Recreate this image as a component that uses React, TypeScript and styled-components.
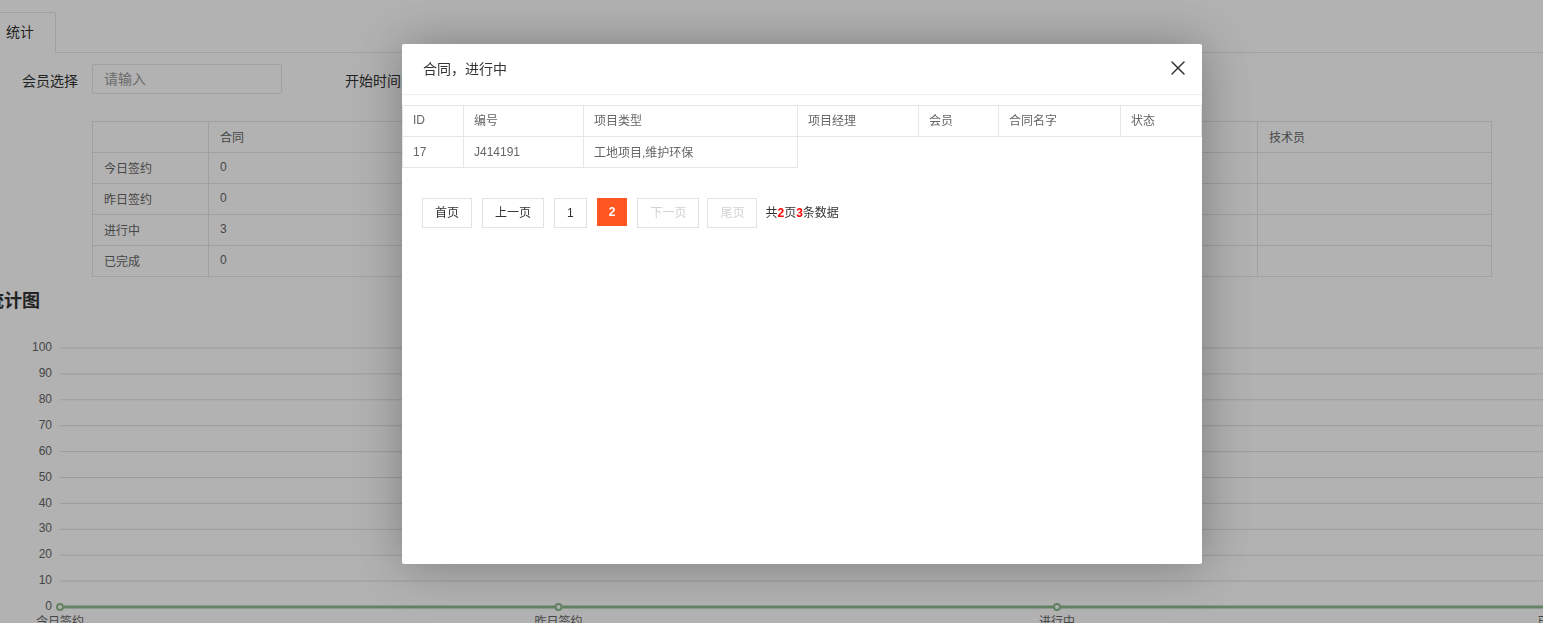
import React from "react";
import styled, { createGlobalStyle } from "styled-components";
import { X } from "lucide-react";

const GlobalStyle = createGlobalStyle`
  html, body {
    margin: 0;
    padding: 0;
    background: #fff;
    overflow: hidden;
  }
  body {
    font-family: "Liberation Sans", "Noto Sans CJK SC", sans-serif;
    font-size: 14px;
    color: #333;
  }
`;

const Page = styled.div`
  width: 1580px;
  margin-left: -14px;
  padding-top: 12px;
`;

const TabBar = styled.ul`
  display: flex;
  margin: 0;
  padding: 0;
  list-style: none;
  height: 40px;
  border-bottom: 1px solid #e6e6e6;
`;

const Tab = styled.li`
  box-sizing: border-box;
  height: 41px;
  line-height: 39px;
  padding: 0 21px 0 19px;
  background: #fff;
  border: 1px solid #e6e6e6;
  border-bottom-color: #fff;
  border-radius: 2px 2px 0 0;
  color: #333;
`;

const FormRow = styled.div`
  display: flex;
  align-items: center;
  height: 30px;
  margin-top: 11px;
  padding-left: 36px;
`;

const Label = styled.label<{ $gap: number }>`
  font-size: 14px;
  color: #333;
  padding-top: 2px;
  margin-right: ${(p) => p.$gap}px;
`;

const Input = styled.input`
  box-sizing: border-box;
  width: 190px;
  height: 30px;
  padding: 0 11px;
  border: 1px solid #e6e6e6;
  border-radius: 2px;
  font-family: inherit;
  font-size: 14px;
  color: #333;
  margin-right: 63px;
  &::placeholder {
    color: #999;
  }
`;

const StatTable = styled.table`
  margin: 27px 0 0 106px;
  width: 1399px;
  border-collapse: collapse;
  table-layout: fixed;
  font-size: 12px;
  color: #666;
`;

const Cell = styled.td`
  height: 31px;
  box-sizing: border-box;
  padding: 0 11px 2px;
  border: 1px solid #e6e6e6;
  text-align: left;
  font-weight: normal;
`;

const ChartTitle = styled.h3`
  margin: 12px 0 0;
  font-size: 18px;
  line-height: 24px;
  font-weight: bold;
  color: #333;
`;

const Chart = styled.svg`
  display: block;
  margin-top: 18px;
  font-family: "Liberation Sans", "Noto Sans CJK SC", sans-serif;
  font-size: 12px;
`;

const Shade = styled.div`
  position: fixed;
  inset: 0;
  background: rgba(0, 0, 0, 0.3);
`;

const Modal = styled.div`
  position: fixed;
  left: 402px;
  top: 44px;
  width: 800px;
  height: 520px;
  background: #fff;
  border-radius: 2px;
  box-shadow: 1px 1px 50px rgba(0, 0, 0, 0.3);
`;

const ModalTitle = styled.div`
  height: 50px;
  line-height: 50px;
  padding: 0 80px 0 21px;
  border-bottom: 1px solid #eee;
  font-size: 14px;
  color: #333;
`;

const CloseButton = styled.span`
  position: absolute;
  top: 12px;
  right: 12px;
  width: 24px;
  height: 24px;
  color: #333;
  cursor: pointer;
  display: flex;
`;

const ListTable = styled.table`
  margin-top: 10px;
  width: 799px;
  border-collapse: collapse;
  table-layout: fixed;
  font-size: 12px;
  color: #666;
`;

const ListCell = styled.td`
  height: 31px;
  box-sizing: border-box;
  padding: 0 10px 1px;
  border: 1px solid #e6e6e6;
  text-align: left;
  font-weight: normal;
  white-space: nowrap;
  th& {
    padding-bottom: 3px;
  }
`;

const Pager = styled.div`
  display: flex;
  align-items: flex-start;
  gap: 10px;
  margin-top: 30px;
  padding-left: 20px;
  font-size: 12px;
`;

const PageBtn = styled.a<{ $disabled?: boolean; $tight?: boolean }>`
  box-sizing: border-box;
  height: 30px;
  line-height: 28px;
  padding: 0 12px;
  border: 1px solid #e2e2e2;
  background: #fff;
  margin-left: ${(p) => (p.$tight ? "-2px" : "0")};
  color: ${(p) => (p.$disabled ? "#d2d2d2" : "#333")};
  cursor: ${(p) => (p.$disabled ? "not-allowed" : "pointer")};
`;

const PageCurrent = styled.span`
  height: 28px;
  line-height: 28px;
  padding: 0 12px;
  background: #ff5722;
  color: #fff;
  font-weight: bold;
`;

const Summary = styled.span`
  line-height: 30px;
  margin-left: -2px;
  color: #333;
  b {
    color: #f00;
  }
`;

const statRows = [
  ["今日签约", "0"],
  ["昨日签约", "0"],
  ["进行中", "3"],
  ["已完成", "0"],
];

const listCols = [
  ["ID", 61],
  ["编号", 120],
  ["项目类型", 214],
  ["项目经理", 121],
  ["会员", 80],
  ["合同名字", 122],
  ["状态", 81],
] as const;

const ticks = [100, 90, 80, 70, 60, 50, 40, 30, 20, 10, 0];
const cats = ["今日签约", "昨日签约", "进行中", "已完成"];
const gridTop = 17;
const step = 25.9;
const zeroY = gridTop + step * 10;

const App = () => (
  <>
    <GlobalStyle />
    <Page>
      <TabBar>
        <Tab>统计</Tab>
      </TabBar>
      <FormRow>
        <Label $gap={14}>会员选择</Label>
        <Input placeholder="请输入" />
        <Label $gap={10}>开始时间</Label>
        <Input placeholder="请选择" />
      </FormRow>
      <StatTable>
        <colgroup>
          <col style={{ width: 116 }} />
          <col style={{ width: 262 }} />
          <col style={{ width: 262 }} />
          <col style={{ width: 262 }} />
          <col style={{ width: 263 }} />
          <col style={{ width: 234 }} />
        </colgroup>
        <thead>
          <tr>
            <Cell as="th"></Cell>
            <Cell as="th">合同</Cell>
            <Cell as="th">项目</Cell>
            <Cell as="th">会员</Cell>
            <Cell as="th">项目经理</Cell>
            <Cell as="th">技术员</Cell>
          </tr>
        </thead>
        <tbody>
          {statRows.map(([name, n]) => (
            <tr key={name}>
              <Cell>{name}</Cell>
              <Cell>{n}</Cell>
              <Cell></Cell>
              <Cell></Cell>
              <Cell></Cell>
              <Cell></Cell>
            </tr>
          ))}
        </tbody>
      </StatTable>
      <ChartTitle>统计图</ChartTitle>
      <Chart width={1580} height={300}>
        {ticks.map((t, i) => {
          const y = gridTop + step * i;
          return (
            <g key={t}>
              {t !== 0 && <line x1={74} x2={1580} y1={y} y2={y} stroke="#e0e0e0" strokeWidth={1} />}
              <text x={66} y={y} textAnchor="end" dominantBaseline="middle" fill="#666">
                {t}
              </text>
            </g>
          );
        })}
        <line x1={74} x2={1580} y1={zeroY} y2={zeroY} stroke="#8fbc8f" strokeWidth={3} />
        {cats.map((c, k) => {
          const x = 74 + 498.5 * k;
          return (
            <g key={c}>
              <circle cx={x} cy={zeroY} r={3} fill="#fff" stroke="#8fbc8f" strokeWidth={2} />
              <text x={x} y={zeroY + 16} textAnchor="middle" dominantBaseline="middle" fill="#666">
                {c}
              </text>
            </g>
          );
        })}
      </Chart>
    </Page>
    <Shade />
    <Modal>
      <ModalTitle>合同，进行中</ModalTitle>
      <CloseButton>
        <X size={24} strokeWidth={1.5} />
      </CloseButton>
      <ListTable>
        <colgroup>
          {listCols.map(([name, w]) => (
            <col key={name} style={{ width: w }} />
          ))}
        </colgroup>
        <thead>
          <tr>
            {listCols.map(([name]) => (
              <ListCell as="th" key={name}>
                {name}
              </ListCell>
            ))}
          </tr>
        </thead>
        <tbody>
          <tr>
            <ListCell>17</ListCell>
            <ListCell>J414191</ListCell>
            <ListCell>工地项目,维护环保</ListCell>
          </tr>
        </tbody>
      </ListTable>
      <Pager>
        <PageBtn>首页</PageBtn>
        <PageBtn>上一页</PageBtn>
        <PageBtn>1</PageBtn>
        <PageCurrent>2</PageCurrent>
        <PageBtn $disabled>下一页</PageBtn>
        <PageBtn $disabled $tight>
          尾页
        </PageBtn>
        <Summary>
          共<b>2</b>页<b>3</b>条数据
        </Summary>
      </Pager>
    </Modal>
  </>
);

export default App;
